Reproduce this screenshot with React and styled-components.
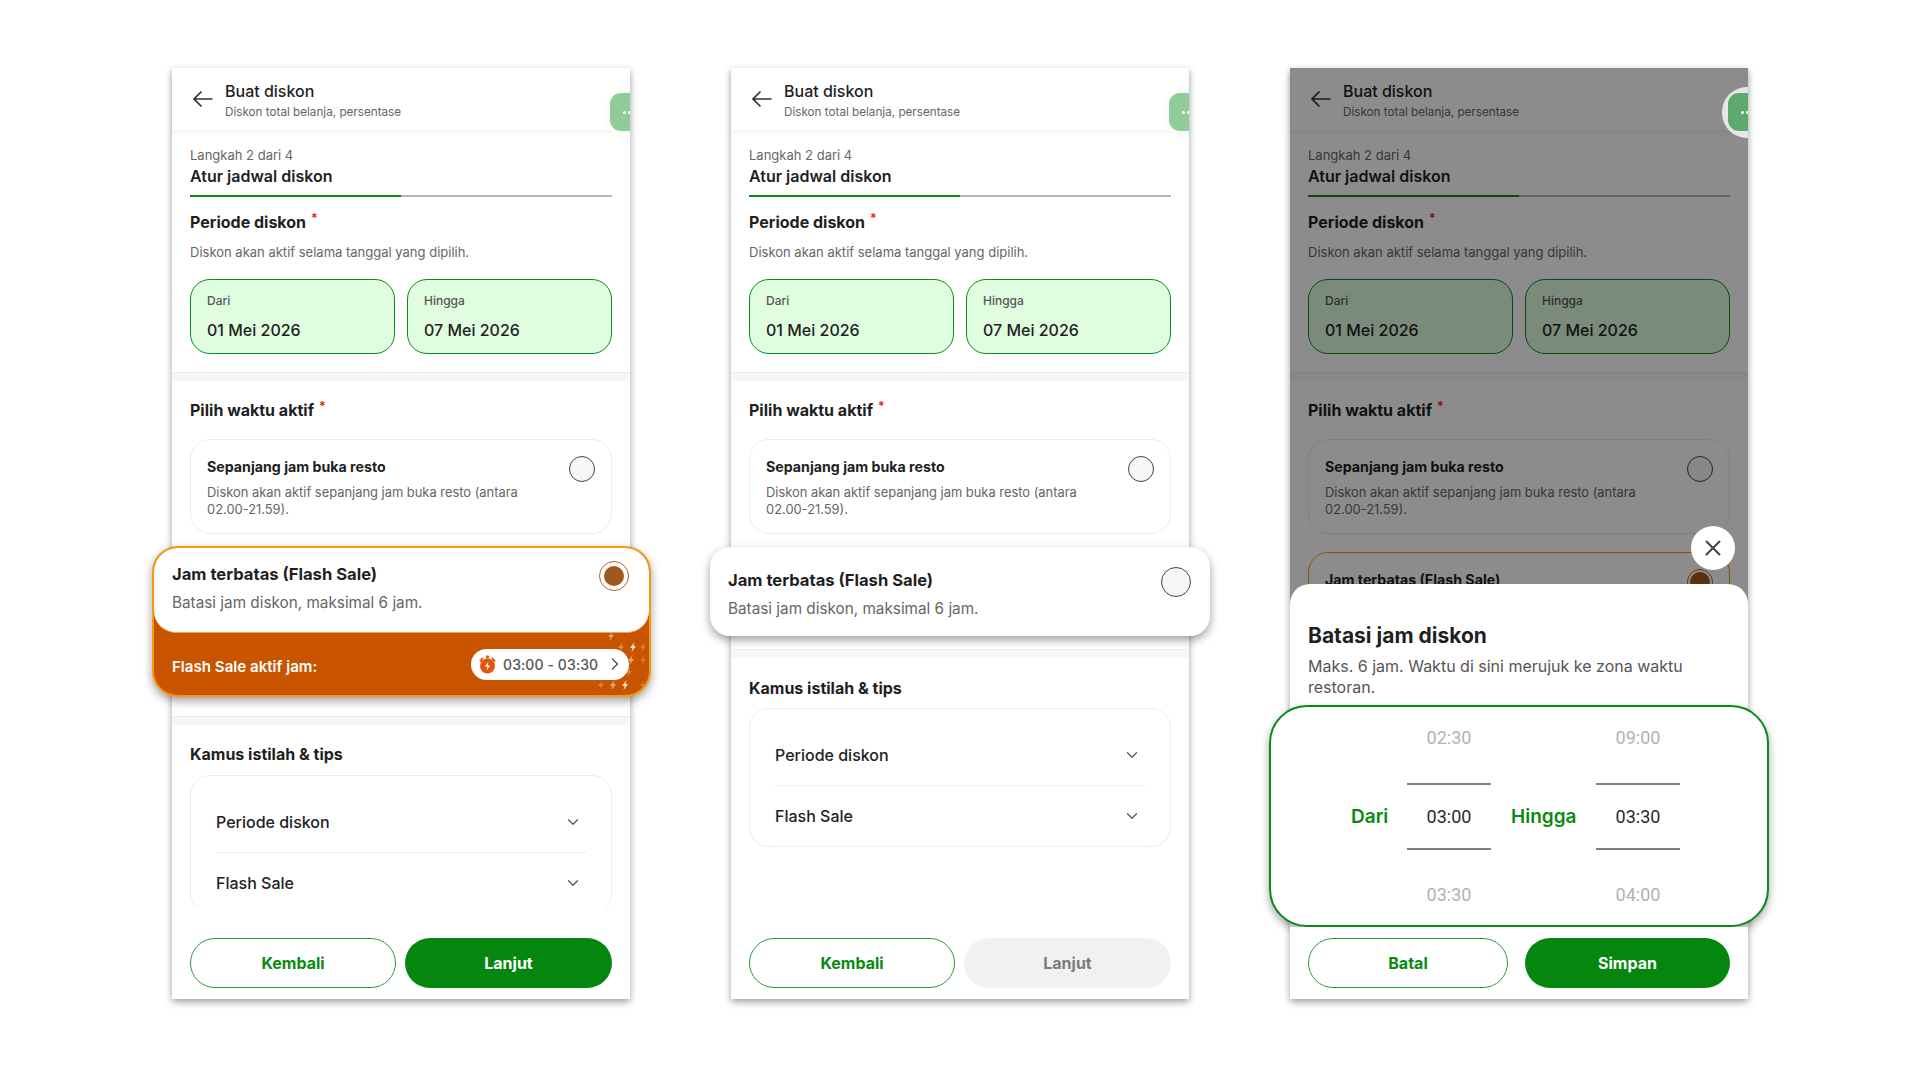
import styled, { createGlobalStyle } from 'styled-components'
import { ChevronDown, ChevronRight, X } from 'lucide-react'

const GlobalStyle = createGlobalStyle`
    html, body {
        margin: 0;
        background: #fff;
        font-family: Inter, "Noto Sans", sans-serif;
        color: #1f1f1f;
    }
    * {
        box-sizing: border-box;
    }
`

const Page = styled.div`
    display: flex;
    gap: 101px;
    width: 1918px;
    height: 1072px;
    padding: 68px 0 0 172px;
    overflow: hidden;
`

const Phone = styled.div`
    position: relative;
    display: flex;
    flex-direction: column;
    width: 458px;
    height: 931px;
    background: #fff;
    box-shadow: 0 3px 7px rgba(0, 0, 0, 0.38);
`

const Header = styled.div`
    display: flex;
    align-items: center;
    gap: 12px;
    flex-shrink: 0;
    height: 62px;
    padding-left: 20px;
    box-shadow: 0 3px 5px rgba(0, 0, 0, 0.05);
`

const HeaderTitle = styled.div`
    font-size: 16px;
    line-height: 22px;
    font-weight: 500;
    margin-top: 2px;
`

const HeaderSub = styled.div`
    font-size: 11.7px;
    line-height: 16px;
    color: #666;
    margin-top: 2px;
`

const FloaterClip = styled.div`
    position: absolute;
    top: 19px;
    right: 0;
    z-index: 6;
    width: 26px;
    height: 51px;
    padding: 6px;
    overflow: hidden;
    border-radius: 25px 0 0 25px;
    background: ${(props) => (props.$dim ? '#e6e6e6' : '#fbfbfb')};
`

const Floater = styled.div`
    display: flex;
    align-items: center;
    gap: 2px;
    width: 40px;
    height: 38px;
    padding-left: 13px;
    border-radius: 11px;
    background: ${(props) => (props.$dim ? '#5fa96e' : '#90cc98')};
`

const Dot = styled.span`
    flex-shrink: 0;
    width: 3px;
    height: 3px;
    border-radius: 50%;
    background: #fff;
`

const Body = styled.div`
    flex: 1;
    min-height: 0;
    display: flex;
    flex-direction: column;
`

const Section = styled.div`
    padding: ${(props) => props.$padding || '0 18px'};
`

const StepLabel = styled.div`
    font-size: 13px;
    line-height: 18px;
    color: #666;
`

const StepTitle = styled.div`
    font-size: 16px;
    line-height: 22px;
    font-weight: 600;
    margin-top: 1px;
`

const ProgressTrack = styled.div`
    height: 2px;
    margin-top: 8px;
    background: #b5b5b5;
`

const ProgressFill = styled.div`
    height: 100%;
    background: #07891a;
`

const SectionTitle = styled.div`
    font-size: 16px;
    line-height: 22px;
    font-weight: 700;
    margin-top: ${(props) => props.$top || 0}px;
`

const Star = styled.span`
    display: inline-block;
    margin-left: 5px;
    font-size: 12px;
    line-height: 12px;
    color: #e2231a;
    vertical-align: 6px;
`

const SectionDesc = styled.div`
    font-size: 13px;
    line-height: 18px;
    color: #666;
    margin-top: 10px;
`

const DateRow = styled.div`
    display: flex;
    gap: 12px;
    margin-top: 18px;
`

const DateCard = styled.div`
    flex: 1;
    height: 75px;
    padding: 13px 16px;
    border: 1.5px solid #0b8a1e;
    border-radius: 20px;
    background: #e0fde0;
`

const DateLabel = styled.div`
    font-size: 12px;
    line-height: 16px;
    font-weight: 500;
    color: #555;
`

const DateValue = styled.div`
    font-size: 16px;
    line-height: 22px;
    font-weight: 500;
    margin-top: 10px;
`

const Band = styled.div`
    flex-shrink: 0;
    height: 9px;
    margin-top: ${(props) => props.$top}px;
    border-top: 1px solid #ececec;
    background: #f7f7f7;
`

const OptionCard = styled.div`
    display: flex;
    justify-content: space-between;
    height: 95px;
    margin-top: 18px;
    padding: 18px 16px 0 16px;
    border: 1px solid #ececec;
    border-radius: 20px;
`

const OptionTitle = styled.div`
    font-size: 14.2px;
    line-height: 18px;
    font-weight: 700;
`

const OptionDesc = styled.div`
    font-size: 12.9px;
    line-height: 17px;
    color: #666;
    margin-top: 8px;
    padding-right: 20px;
`

const Radio = styled.div`
    flex-shrink: 0;
    display: flex;
    align-items: center;
    justify-content: center;
    width: ${(props) => props.$size}px;
    height: ${(props) => props.$size}px;
    margin-top: -2px;
    border: 1.5px solid ${(props) => (props.$on ? '#b8601c' : '#444')};
    border-radius: 50%;
    background: ${(props) => (props.$on ? '#fff' : '#f6f6f6')};
`

const RadioDot = styled.div`
    width: 20px;
    height: 20px;
    border-radius: 50%;
    background: #a0581c;
`

const FlashOuter = styled.div`
    position: relative;
    margin: 12px -21px 0 -20px;
    border: 2px solid #f59a0f;
    border-radius: 26px;
    background: #c85400;
    overflow: hidden;
    box-shadow: 0 4px 10px rgba(0, 0, 0, 0.38);
`

const FlashTop = styled.div`
    display: flex;
    justify-content: space-between;
    height: 85px;
    padding: 15px 20px 0 18px;
    border-radius: 0 0 22px 22px;
    border-bottom: 1px solid #f2a550;
    background: #fff;
`

const FlashPlain = styled.div`
    display: flex;
    justify-content: space-between;
    height: 89px;
    margin: 13px -21px 0;
    padding: 22px 19px 0 18px;
    border-radius: 20px;
    background: #fff;
    box-shadow: 0 4px 10px rgba(0, 0, 0, 0.38);
`

const FlashDimmed = styled.div`
    display: flex;
    justify-content: space-between;
    height: 120px;
    margin-top: 18px;
    padding: 18px 16px 0;
    border: 1.5px solid #f59a0f;
    border-radius: 20px;
`

const FlashTitle = styled.div`
    font-size: 16.6px;
    line-height: 22px;
    font-weight: 700;
`

const FlashDesc = styled.div`
    font-size: 15.3px;
    line-height: 20px;
    color: #666;
    margin-top: 8px;
`

const FlashBand = styled.div`
    position: relative;
    display: flex;
    align-items: center;
    justify-content: space-between;
    height: 62px;
    padding: 3px 20px 0 18px;
`

const FlashBandLabel = styled.div`
    margin-top: 2px;
    font-size: 15.1px;
    font-weight: 600;
    color: #fff;
`

const Sparkles = styled.svg`
    position: absolute;
    right: 0;
    top: 0;
`

const TimePill = styled.div`
    position: relative;
    display: flex;
    align-items: center;
    width: 158px;
    height: 31px;
    margin-top: -3px;
    padding-left: 7px;
    border-radius: 16px;
    background: #fff;
    color: #555;
`

const TimeText = styled.span`
    width: 96px;
    font-size: 14px;
    letter-spacing: 0.1px;
    font-weight: 500;
    margin: 0 6px;
    white-space: nowrap;
`

const Accordion = styled.div`
    margin-top: ${(props) => props.$top}px;
    padding: 16px 25px 0;
    border: 1px solid #ececec;
    border-radius: 20px;
    background: #fff;
`

const AccordionRow = styled.div`
    display: flex;
    align-items: center;
    justify-content: space-between;
    height: ${(props) => (props.$last ? 60 : 61)}px;
    padding-right: 4px;
    font-size: 16px;
    font-weight: 500;
    border-bottom: ${(props) => (props.$last ? 'none' : '1px solid #ececec')};
    color: #222;
`

const Footer = styled.div`
    position: relative;
    flex-shrink: 0;
    display: flex;
    gap: ${(props) => props.$gap}px;
    padding: ${(props) => props.$padding};
    background: #fff;
`

const Button = styled.div`
    flex: ${(props) => (props.$width ? `0 0 ${props.$width}px` : '1')};
    display: flex;
    align-items: center;
    justify-content: center;
    height: 50px;
    border-radius: 25px;
    font-size: 16px;
    font-weight: 700;
    border: ${(props) => (props.$variant === 'outline' ? '1.5px solid #2a9a36' : 'none')};
    color: ${(props) => {
        if (props.$variant === 'outline') return '#078a10'
        if (props.$variant === 'disabled') return '#7d7d7d'
        return '#fff'
    }};
    background: ${(props) => {
        if (props.$variant === 'outline') return '#fff'
        if (props.$variant === 'disabled') return '#f1f1f1'
        return '#05870f'
    }};
`

const Overlay = styled.div`
    position: absolute;
    inset: 0;
    z-index: 5;
    background: rgba(0, 0, 0, 0.45);
`

const Sheet = styled.div`
    position: absolute;
    left: 0;
    right: 0;
    bottom: 0;
    z-index: 7;
    display: flex;
    flex-direction: column;
    height: 415px;
    padding-top: 37px;
    border-radius: 20px 20px 0 0;
    background: #fff;
`

const CloseButton = styled.div`
    position: absolute;
    top: -58px;
    right: 13px;
    display: flex;
    align-items: center;
    justify-content: center;
    width: 44px;
    height: 44px;
    border-radius: 50%;
    background: #fff;
    color: #444;
`

const SheetTitle = styled.div`
    font-size: 21px;
    line-height: 30px;
    font-weight: 700;
    padding: 0 18px;
`

const SheetDesc = styled.div`
    font-size: 16px;
    line-height: 21px;
    color: #555;
    margin-top: 5px;
    padding: 0 18px;
`

const Picker = styled.div`
    display: flex;
    align-items: center;
    flex-shrink: 0;
    height: 222px;
    margin: 7px -21px 0;
    padding-left: 80px;
    border: 2px solid #0b8a1e;
    border-radius: 38px;
    background: #fff;
    box-shadow: 0 4px 8px rgba(0, 0, 0, 0.35);
`

const PickerLabel = styled.div`
    width: ${(props) => props.$width}px;
    margin-right: 20px;
    font-size: 19px;
    font-weight: 600;
    color: #078a10;
`

const PickerColumn = styled.div`
    flex-shrink: 0;
    width: 84px;
    margin-right: ${(props) => props.$right}px;
`

const PickerItem = styled.div`
    display: flex;
    align-items: center;
    justify-content: center;
    height: ${(props) => (props.$selected ? 67 : 90)}px;
    font-family: Roboto, sans-serif;
    font-size: 18px;
    color: ${(props) => (props.$selected ? '#2a2a2a' : '#b2b2b2')};
    border-top: ${(props) => (props.$selected ? '2px solid #808080' : 'none')};
    border-bottom: ${(props) => (props.$selected ? '2px solid #808080' : 'none')};
`

const bolts = [
    [56, 14, 0.95], [44, 14, 0.4], [66, 14, 0.25], [54, 27, 0.55], [66, 27, 0.25],
    [52, 39, 0.3], [48, 52, 0.95], [36, 52, 0.6], [24, 52, 0.3], [66, 52, 0.25], [34, 3, 0.5],
]

function BackArrow() {
    return (
        <svg width="21" height="18" viewBox="0 0 21 18" fill="none" stroke="#333" strokeWidth="1.7">
            <path d="M20.5 9H2M9.5 1.5L2 9l7.500 7.500" />
        </svg>
    )
}

function TimerIcon() {
    return (
        <svg width="19" height="19" viewBox="0 0 19 19">
            <circle cx="9.500" cy="11" r="7.500" fill="#e0560d" />
            <rect x="8" y="0.500" width="3" height="3" rx="1" fill="#e0560d" />
            <path d="M2 6.500L5 3M17 6.500L14 3" stroke="#e0560d" strokeWidth="2" fill="none" />
            <path d="M10.500 6.500L7 11.500h2.500L8.500 15.500 12 10.500H9.500z" fill="#fff" />
        </svg>
    )
}

function Required({ children, top }) {
    return (
        <SectionTitle $top={top}>
            {children}
            <Star>*</Star>
        </SectionTitle>
    )
}

function TopBar({ dim }) {
    return (
        <>
            <Header>
                <BackArrow />
                <div>
                    <HeaderTitle>Buat diskon</HeaderTitle>
                    <HeaderSub>Diskon total belanja, persentase</HeaderSub>
                </div>
            </Header>
            <FloaterClip $dim={dim}>
                <Floater $dim={dim}>
                    <Dot />
                    <Dot />
                </Floater>
            </FloaterClip>
        </>
    )
}

function UpperSections() {
    return (
        <>
            <Section $padding="16px 18px 18px">
                <StepLabel>Langkah 2 dari 4</StepLabel>
                <StepTitle>Atur jadwal diskon</StepTitle>
                <ProgressTrack>
                    <ProgressFill style={{ width: '50%' }} />
                </ProgressTrack>
                <Required top={14}>Periode diskon</Required>
                <SectionDesc>Diskon akan aktif selama tanggal yang dipilih.</SectionDesc>
                <DateRow>
                    <DateCard>
                        <DateLabel>Dari</DateLabel>
                        <DateValue>01 Mei 2026</DateValue>
                    </DateCard>
                    <DateCard>
                        <DateLabel>Hingga</DateLabel>
                        <DateValue>07 Mei 2026</DateValue>
                    </DateCard>
                </DateRow>
            </Section>
            <Band $top={0} />
            <Section $padding="18px 18px 0">
                <Required>Pilih waktu aktif</Required>
                <OptionCard>
                    <div>
                        <OptionTitle>Sepanjang jam buka resto</OptionTitle>
                        <OptionDesc>Diskon akan aktif sepanjang jam buka resto (antara 02.00-21.59).</OptionDesc>
                    </div>
                    <Radio $size={26} />
                </OptionCard>
            </Section>
        </>
    )
}

function Glossary({ bandTop, titlePad, accordionTop }) {
    return (
        <>
            <Band $top={bandTop} />
            <Section $padding={`${titlePad}px 18px 0`}>
                <SectionTitle>Kamus istilah &amp; tips</SectionTitle>
                <Accordion $top={accordionTop}>
                    <AccordionRow>
                        Periode diskon
                        <ChevronDown size={18} strokeWidth={1.6} color="#555" />
                    </AccordionRow>
                    <AccordionRow $last>
                        Flash Sale
                        <ChevronDown size={18} strokeWidth={1.6} color="#555" />
                    </AccordionRow>
                </Accordion>
            </Section>
        </>
    )
}

function App() {
    return (
        <Page>
            <GlobalStyle />

            <Phone>
                <TopBar />
                <Body>
                    <UpperSections />
                    <Section $padding="0">
                        <FlashOuter>
                            <FlashTop>
                                <div>
                                    <FlashTitle>Jam terbatas (Flash Sale)</FlashTitle>
                                    <FlashDesc>Batasi jam diskon, maksimal 6 jam.</FlashDesc>
                                </div>
                                <Radio $size={30} $on>
                                    <RadioDot />
                                </Radio>
                            </FlashTop>
                            <FlashBand>
                                <Sparkles width="72" height="62" viewBox="0 0 72 62">
                                    {bolts.map(([x, y, o]) => (
                                        <path
                                            key={`${x}-${y}`}
                                            d="M1.500 -5L-3 1h2.500L-1.500 5 3 -1H0.500z"
                                            transform={`translate(${x} ${y})`}
                                            fill="#ffe9d0"
                                            opacity={o}
                                        />
                                    ))}
                                </Sparkles>
                                <FlashBandLabel>Flash Sale aktif jam:</FlashBandLabel>
                                <TimePill>
                                    <TimerIcon />
                                    <TimeText>03:00 - 03:30</TimeText>
                                    <ChevronRight size={20} strokeWidth={1.7} />
                                </TimePill>
                            </FlashBand>
                        </FlashOuter>
                    </Section>
                    <Glossary bandTop={19} titlePad={18} accordionTop={10} />
                </Body>
                <Footer $gap={9} $padding="31px 18px 11px">
                    <Button $variant="outline" $width={206}>Kembali</Button>
                    <Button>Lanjut</Button>
                </Footer>
            </Phone>

            <Phone>
                <TopBar />
                <Body>
                    <UpperSections />
                    <Section $padding="0">
                        <FlashPlain>
                            <div>
                                <FlashTitle>Jam terbatas (Flash Sale)</FlashTitle>
                                <FlashDesc>Batasi jam diskon, maksimal 6 jam.</FlashDesc>
                            </div>
                            <Radio $size={30} />
                        </FlashPlain>
                    </Section>
                    <Glossary bandTop={13} titlePad={19} accordionTop={9} />
                </Body>
                <Footer $gap={9} $padding="31px 18px 11px">
                    <Button $variant="outline" $width={206}>Kembali</Button>
                    <Button $variant="disabled">Lanjut</Button>
                </Footer>
            </Phone>

            <Phone>
                <TopBar dim />
                <Body>
                    <UpperSections />
                    <Section>
                        <FlashDimmed>
                            <OptionTitle>Jam terbatas (Flash Sale)</OptionTitle>
                            <Radio $size={26} $on>
                                <RadioDot />
                            </Radio>
                        </FlashDimmed>
                    </Section>
                </Body>
                <Overlay />
                <Sheet>
                    <CloseButton>
                        <X size={26} strokeWidth={1.8} />
                    </CloseButton>
                    <SheetTitle>Batasi jam diskon</SheetTitle>
                    <SheetDesc>Maks. 6 jam. Waktu di sini merujuk ke zona waktu restoran.</SheetDesc>
                    <Picker>
                        <PickerLabel $width={36}>Dari</PickerLabel>
                        <PickerColumn $right={20}>
                            <PickerItem>02:30</PickerItem>
                            <PickerItem $selected>03:00</PickerItem>
                            <PickerItem>03:30</PickerItem>
                        </PickerColumn>
                        <PickerLabel $width={65}>Hingga</PickerLabel>
                        <PickerColumn $right={0}>
                            <PickerItem>09:00</PickerItem>
                            <PickerItem $selected>03:30</PickerItem>
                            <PickerItem>04:00</PickerItem>
                        </PickerColumn>
                    </Picker>
                    <Footer $gap={17} $padding="11px 18px 11px">
                        <Button $variant="outline" $width={200}>Batal</Button>
                        <Button>Simpan</Button>
                    </Footer>
                </Sheet>
            </Phone>
        </Page>
    )
}

export default App
